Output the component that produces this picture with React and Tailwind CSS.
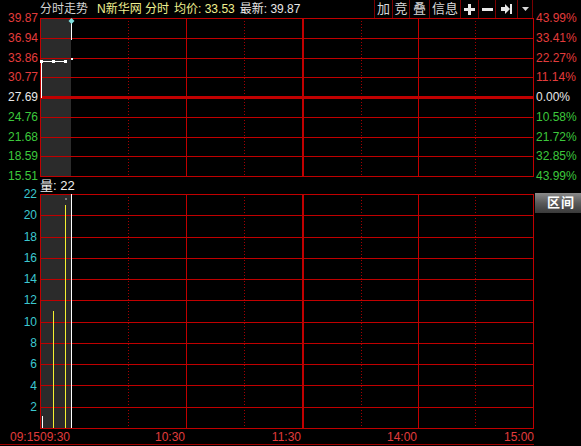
const RED = '#c00000';

const vLines = [
  { x: 88, kind: 'dot' },
  { x: 146, kind: 'solid' },
  { x: 204, kind: 'dot' },
  { x: 262, kind: 'thick' },
  { x: 321, kind: 'dot' },
  { x: 378, kind: 'solid' },
  { x: 435, kind: 'dot' },
];

const priceRows = [0, 20, 40, 59, 79, 99, 119, 138, 158];
const volRows = [0, 21, 43, 64, 85, 106, 128, 149, 170, 191, 213, 234];

const priceLeft = [
  { v: '39.87', c: 'text-[#e23c3c]' },
  { v: '36.94', c: 'text-[#e23c3c]' },
  { v: '33.86', c: 'text-[#e23c3c]' },
  { v: '30.77', c: 'text-[#e23c3c]' },
  { v: '27.69', c: 'text-[#e8e8e8]' },
  { v: '24.76', c: 'text-[#3cc83c]' },
  { v: '21.68', c: 'text-[#3cc83c]' },
  { v: '18.59', c: 'text-[#3cc83c]' },
  { v: '15.51', c: 'text-[#3cc83c]' },
];

const priceRight = [
  { v: '43.99%', c: 'text-[#e23c3c]' },
  { v: '33.41%', c: 'text-[#e23c3c]' },
  { v: '22.27%', c: 'text-[#e23c3c]' },
  { v: '11.14%', c: 'text-[#e23c3c]' },
  { v: '0.00%', c: 'text-[#e8e8e8]' },
  { v: '10.58%', c: 'text-[#3cc83c]' },
  { v: '21.72%', c: 'text-[#3cc83c]' },
  { v: '32.85%', c: 'text-[#3cc83c]' },
  { v: '43.99%', c: 'text-[#3cc83c]' },
];

const volLeft = ['22', '20', '18', '16', '14', '12', '10', '8', '6', '4', '2'];

// grid lines shared by both panels
function Grid({ height, rows, thickRow }) {
  return (
    <>
      <rect x="1" y="0" width="30" height={height} fill="#2b2b2b" />
      {rows.map((y, i) => (
        <line
          key={i}
          x1="0"
          x2="494"
          y1={y + 0.5}
          y2={y + 0.5}
          stroke={RED}
          strokeWidth={i === thickRow ? 3 : 1}
        />
      ))}
      {vLines.map((l) => (
        <line
          key={l.x}
          x1={l.x + 0.5}
          x2={l.x + 0.5}
          y1="0"
          y2={height}
          stroke={RED}
          strokeWidth={l.kind === 'thick' ? 2 : 1}
          strokeDasharray={l.kind === 'dot' ? '1 2' : undefined}
          opacity={l.kind === 'dot' ? 0.85 : 1}
        />
      ))}
      <line x1="0.5" x2="0.5" y1="0" y2={height} stroke={RED} />
      <line x1="493.5" x2="493.5" y1="0" y2={height} stroke={RED} />
    </>
  );
}

function PriceChart() {
  return (
    <svg width="494" height="159" shapeRendering="crispEdges" className="block">
      <Grid height={159} rows={priceRows} thickRow={4} />
      {/* price line */}
      <line x1="1.5" x2="1.5" y1="43" y2="80" stroke="#fff" />
      <line x1="1" x2="26" y1="43.5" y2="43.5" stroke="#fff" />
      <rect x="0" y="42" width="3" height="3" fill="#fff" />
      <rect x="12" y="42" width="3" height="3" fill="#fff" />
      <rect x="24" y="42" width="3" height="3" fill="#fff" />
      <line x1="31.5" x2="31.5" y1="2" y2="22" stroke="#fff" />
      <rect x="31" y="40" width="2" height="2" fill="#fff" />
      <polygon points="31.5,0 34.5,3 31.5,6 28.5,3" fill="#7fe0e0" shapeRendering="auto" />
    </svg>
  );
}

function VolumeChart() {
  return (
    <svg width="494" height="235" shapeRendering="crispEdges" className="block">
      <Grid height={235} rows={volRows} thickRow={-1} />
      <line x1="2.5" x2="2.5" y1="222" y2="234" stroke="#fff" />
      <line x1="13.5" x2="13.5" y1="117" y2="234" stroke="#f4f030" />
      <line x1="25.5" x2="25.5" y1="11" y2="234" stroke="#f4f030" />
      <rect x="25" y="4" width="2" height="2" fill="#777" />
      <line x1="31.5" x2="31.5" y1="0" y2="234" stroke="#fff" />
    </svg>
  );
}

function ToolButton({ children, className = '' }) {
  return (
    <div className={`h-full flex items-center justify-center border-l border-[#7a0000] ${className}`}>
      {children}
    </div>
  );
}

export default function App() {
  return (
    <div className="w-[581px] h-[446px] bg-black overflow-hidden font-['Liberation_Sans','Noto_Sans_CJK_SC',sans-serif] text-[12px] leading-[14px] select-none">
      {/* header */}
      <div className="h-[18px] flex items-center">
        <div className="w-[40px]" />
        <span className="text-[#d4d4d4]">分时走势</span>
        <span className="ml-[9px] text-[#f0f090]">N新华网 分时</span>
        <span className="ml-[5px] text-[#f0f090]">均价: 33.53</span>
        <span className="ml-[5px] text-[#e8e8e8]">最新: 39.87</span>
        <div className="ml-auto mr-[48px] h-full flex text-[13px] text-[#d8d8d8] border-r border-[#7a0000]">
          <ToolButton className="w-[18px]">加</ToolButton>
          <ToolButton className="w-[17px]">竞</ToolButton>
          <ToolButton className="w-[20px]">叠</ToolButton>
          <ToolButton className="w-[31px]">信息</ToolButton>
          <ToolButton className="w-[18px]">
            <svg width="11" height="11" viewBox="0 0 11 11">
              <rect x="4" y="0" width="3" height="11" fill="#e8e8e8" />
              <rect x="0" y="4" width="11" height="3" fill="#e8e8e8" />
            </svg>
          </ToolButton>
          <ToolButton className="w-[17px]">
            <svg width="11" height="11" viewBox="0 0 11 11">
              <rect x="0" y="4" width="11" height="3" fill="#e8e8e8" />
            </svg>
          </ToolButton>
          <ToolButton className="w-[22px]">
            <svg width="12" height="10" viewBox="0 0 12 10">
              <rect x="0" y="3" width="4" height="4" fill="#e8e8e8" />
              <polygon points="4,0 9,5 4,10" fill="#e8e8e8" />
              <rect x="9" y="0" width="2" height="10" fill="#e8e8e8" />
            </svg>
          </ToolButton>
          <ToolButton className="w-[15px]">
            <svg width="7" height="4" viewBox="0 0 7 4">
              <polygon points="0,0 7,0 3.5,4" fill="#d8d8d8" />
            </svg>
          </ToolButton>
        </div>
      </div>

      {/* price panel */}
      <div className="h-[159px] flex">
        <div className="w-[40px] h-[172px] -mt-[7px] flex flex-col justify-between items-end pr-[2px]">
          {priceLeft.map((p) => (
            <div key={p.v} className={`h-[14px] ${p.c}`}>{p.v}</div>
          ))}
        </div>
        <PriceChart />
        <div className="w-[47px] h-[172px] -mt-[7px] flex flex-col justify-between pl-[2px]">
          {priceRight.map((p, i) => (
            <div key={i} className={`h-[14px] ${p.c}`}>{p.v}</div>
          ))}
        </div>
      </div>

      {/* volume caption */}
      <div className="h-[17px] flex items-center">
        <div className="w-[40px]" />
        <span className="text-[#f0f0f0] text-[13px]">量: 22</span>
      </div>

      {/* volume panel */}
      <div className="h-[235px] flex">
        <div className="w-[40px] h-[227px] -mt-[7px] flex flex-col justify-between items-end pr-[3px]">
          {volLeft.map((v) => (
            <div key={v} className="h-[14px] text-[#3cc8d0]">{v}</div>
          ))}
        </div>
        <VolumeChart />
        <div className="w-[47px]">
          <div className="-mt-[1px] h-[20px] ml-[1px] flex items-center justify-end pr-[6px] bg-gradient-to-b from-[#8a8a8a] via-[#5a5a5a] to-[#3a3a3a] text-white font-bold text-[13px] tracking-[1px]">
            区间
          </div>
        </div>
      </div>

      {/* time axis */}
      <div className="h-[16px] flex items-center text-[#e03c3c] border-b border-[#a00000] w-[534px]">
        <div className="w-[40px] text-right">09:15</div>
        <div className="w-[30px] text-right">09:30</div>
        <div className="w-[115px] text-right">10:30</div>
        <div className="w-[116px] text-right">11:30</div>
        <div className="w-[116px] text-right">14:00</div>
        <div className="w-[117px] text-right">15:00</div>
      </div>
    </div>
  );
}
